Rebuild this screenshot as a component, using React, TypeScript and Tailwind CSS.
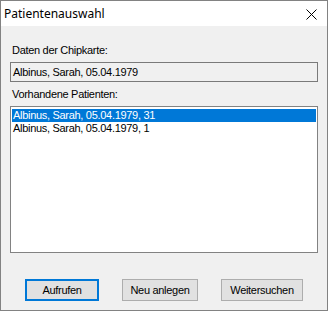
import React from "react";

const patients = ["Albinus, Sarah, 05.04.1979, 31", "Albinus, Sarah, 05.04.1979, 1"];

export default function App() {
  const [selected, setSelected] = React.useState(0);

  return (
    <div className="w-[328px] h-[311px] border border-[#828282] bg-[#f0f0f0] flex flex-col" style={{ fontFamily: '"Liberation Sans", Arial, sans-serif' }}>
      {/* Title bar */}
      <div className="h-[25px] bg-white flex items-center justify-between pl-[3px] pr-[10px] shrink-0">
        <span className="text-[12px] text-black" style={{ fontFamily: '"Noto Sans", "Open Sans", sans-serif' }}>
          Patientenauswahl
        </span>
        <svg width="11" height="11" viewBox="0 0 11 11" className="mt-[2px]">
          <path d="M0.5 0.5 L10.5 10.5 M10.5 0.5 L0.5 10.5" stroke="#000" strokeWidth="1" fill="none" />
        </svg>
      </div>

      <div className="flex-1 flex flex-col px-[9px] text-[11px] leading-[13px] tracking-[-0.3px] text-black">
        <p className="mt-[18px] ml-[2px]">Daten der Chipkarte:</p>
        <div className="mt-[5px] h-[20px] border border-[#7a7a7a] bg-[#f0f0f0] flex items-center px-[2px]">
          Albinus, Sarah, 05.04.1979
        </div>

        <p className="mt-[6px] ml-[2px]">Vorhandene Patienten:</p>
        <div className="mt-[5px] h-[147px] border border-[#828282] bg-white p-[1px] pt-[2px]">
          {patients.map((p, i) => (
            <div
              key={i}
              onClick={() => setSelected(i)}
              className={
                i === selected
                  ? "h-[13px] bg-[#0078d7] text-white pl-[1px]"
                  : "h-[13px] text-black pl-[1px]"
              }
            >
              {p}
            </div>
          ))}
        </div>

        <div className="mt-[26px] flex pl-[15px]">
          <button className="w-[74px] h-[22px] border-2 border-[#0078d7] bg-[#e1e1e1] text-[11px] tracking-[-0.3px]">Aufrufen</button>
          <button className="ml-[23px] w-[76px] h-[22px] border border-[#adadad] bg-[#e1e1e1] text-[11px] tracking-[-0.3px]">Neu anlegen</button>
          <button className="ml-[23px] w-[82px] h-[22px] border border-[#adadad] bg-[#e1e1e1] text-[11px] tracking-[-0.3px]">Weitersuchen</button>
        </div>
      </div>
    </div>
  );
}
